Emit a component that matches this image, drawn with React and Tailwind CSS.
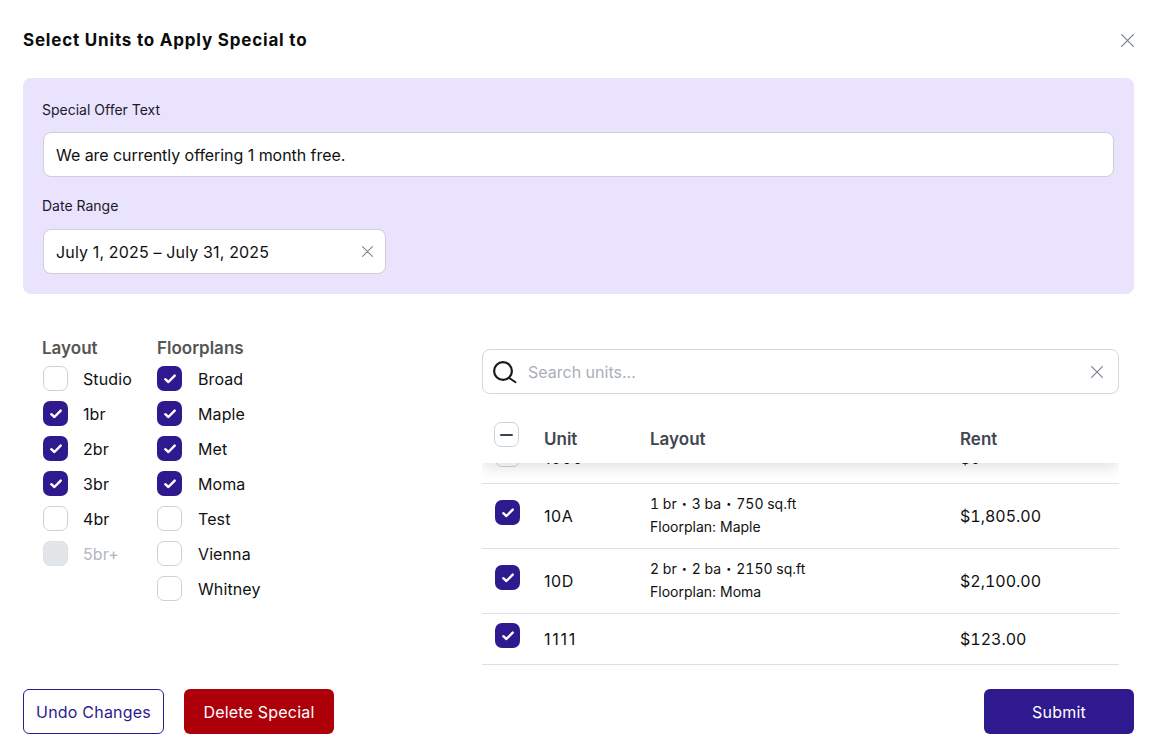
import React from "react";

const font = { fontFamily: "Inter, 'Liberation Sans', sans-serif" };

function Check() {
  return (
    <svg width="12" height="10" viewBox="0 0 12 10" fill="none">
      <path d="M1.3 5.2 L4.4 8 L10.7 1.6" stroke="white" strokeWidth="2.4" strokeLinecap="round" strokeLinejoin="round" />
    </svg>
  );
}

function Box({ state = "off" }) {
  if (state === "on")
    return (
      <span className="flex h-[25px] w-[25px] shrink-0 items-center justify-center rounded-[7px] bg-[#2e1a8e]">
        <Check />
      </span>
    );
  if (state === "disabled")
    return <span className="block h-[25px] w-[25px] shrink-0 rounded-[7px] border border-[#dde1e5] bg-[#e3e6e9]" />;
  if (state === "mixed")
    return (
      <span className="flex h-[25px] w-[25px] shrink-0 items-center justify-center rounded-[7px] border border-[#ccd2da] bg-white">
        <span className="block h-[2px] w-[13px] rounded-full bg-[#374151]" />
      </span>
    );
  return <span className="block h-[25px] w-[25px] shrink-0 rounded-[7px] border border-[#ccd2da] bg-white" />;
}

function XIcon({ size = 13, color = "#7c858f" }) {
  return (
    <svg width={size} height={size} viewBox="0 0 12 12" fill="none" className="shrink-0">
      <path d="M0.6 0.6 L11.4 11.4 M11.4 0.6 L0.6 11.4" stroke={color} strokeWidth="1.2" strokeLinecap="round" />
    </svg>
  );
}

function Option({ label, state, gap, disabled }) {
  return (
    <div className="flex h-[35px] items-center">
      <Box state={state} />
      <span className={`text-base tracking-[0.1px] ${gap} ${disabled ? "text-[#b0b7bf]" : "text-[#111111]"}`}>{label}</span>
    </div>
  );
}

function Dot() {
  return <span className="mx-[5px] text-[9px] leading-none">•</span>;
}

function Row({ unit, unitClass, details, floorplan, rent, h, state = "on" }) {
  return (
    <div className={`flex ${h} items-center border-b border-[#dcdfe3] pl-[13px] text-base text-[#111111]`}>
      <div className="mb-[7px] w-[49px] shrink-0">
        <Box state={state} />
      </div>
      <div className={`w-[106px] shrink-0 ${unitClass}`}>{unit}</div>
      <div className="mb-[2px] w-[310px] shrink-0 text-sm leading-[23px]">
        {details && (
          <div className="flex items-center tabular-nums">
            <span>{details[0]}</span>
            <Dot />
            <span>{details[1]}</span>
            <Dot />
            <span>{details[2]}</span>
          </div>
        )}
        {floorplan && <div>Floorplan: {floorplan}</div>}
      </div>
      <div className="tabular-nums">{rent}</div>
    </div>
  );
}

export default function App() {
  const layouts = [["Studio", "off"], ["1br", "on"], ["2br", "on"], ["3br", "on"], ["4br", "off"], ["5br+", "disabled"]];
  const plans = [["Broad", "on"], ["Maple", "on"], ["Met", "on"], ["Moma", "on"], ["Test", "off"], ["Vienna", "off"], ["Whitney", "off"]];
  return (
    <div style={font} className="flex h-[756px] w-full flex-col overflow-hidden bg-white pl-[23px] pr-[22px] text-[#111111]">
      <div className="flex h-[78px] shrink-0 items-center justify-between pt-[3px]">
        <h1 className="text-[17px] font-bold tracking-[0.8px] text-[#0b0b0b]">Select Units to Apply Special to</h1>
        <button className="flex h-[13px] w-[13px] items-center justify-center">
          <XIcon size={13} />
        </button>
      </div>

      <section className="h-[216px] shrink-0 rounded-lg bg-[#e9e3fd] px-[20px] pt-[22px]">
        <div className="ml-[-1px] h-[20px] text-sm leading-[20px] text-[#1a1a2a]">Special Offer Text</div>
        <div className="mt-[12px] flex h-[45px] items-center rounded-lg border border-[#cfcfd6] bg-white px-[12px] text-base tracking-[-0.05px]">
          We are currently offering 1 month free.
        </div>
        <div className="ml-[-1px] mt-[19px] h-[20px] text-sm leading-[20px] text-[#1a1a2a]">Date Range</div>
        <div className="mt-[13px] flex h-[45px] w-[343px] items-center justify-between rounded-lg border border-[#cfcfd6] bg-white pl-[12px] pr-[12px] text-base tracking-[0.15px]">
          <span>July 1, 2025 – July 31, 2025</span>
          <XIcon size={11} />
        </div>
      </section>

      <div className="flex h-[395px] shrink-0">
        <div className="flex w-[459px] shrink-0 pl-[20px] pt-[44px]">
          <div className="w-[114px] shrink-0">
            <div className="mb-[3px] ml-[-1px] h-[20px] text-[17px] font-semibold leading-[20px] text-[#555555]">Layout</div>
            {layouts.map(([l, s]) => (
              <Option key={l} label={l} state={s} gap="ml-[15px]" disabled={s === "disabled"} />
            ))}
          </div>
          <div>
            <div className="mb-[3px] h-[20px] text-[17px] font-semibold leading-[20px] text-[#555555]">Floorplans</div>
            {plans.map(([l, s]) => (
              <Option key={l} label={l} state={s} gap="ml-[16px]" />
            ))}
          </div>
        </div>

        <div className="w-[637px] shrink-0 pt-[55px]">
          <div className="flex h-[45px] items-center rounded-lg border border-[#d4d6d9] bg-white pl-[10px] pr-[15px]">
            <svg width="24" height="26" viewBox="0 0 24 26" fill="none" className="shrink-0">
              <circle cx="10" cy="12" r="8.9" stroke="#1a1a1a" strokeWidth="2.2" />
              <path d="M17 19.5 L22.5 23.3" stroke="#1a1a1a" strokeWidth="2" strokeLinecap="round" />
            </svg>
            <span className="ml-[11px] flex-1 text-base text-[#a8afb8]">Search units...</span>
            <XIcon size={12} />
          </div>

          <div className="relative mt-[20px] h-[252px] overflow-hidden">
            <div className="relative z-10 flex h-[49px] items-center bg-white pl-[12px] pt-[2px] text-[17px] font-semibold text-[#3f4650] shadow-[0_4px_14px_rgba(0,0,0,0.12)]">
              <div className="mb-[10px] w-[50px] shrink-0">
                <Box state="mixed" />
              </div>
              <div className="w-[106px] shrink-0">Unit</div>
              <div className="w-[310px] shrink-0">Layout</div>
              <div>Rent</div>
            </div>
            <div className="mt-[-30px]">
              <Row unit="1000" unitClass="tracking-[0.6px]" rent="$0" h="h-[51px]" state="off" />
              <Row unit="10A" unitClass="tracking-[0.6px]" details={["1 br", "3 ba", "750 sq.ft"]} floorplan="Maple" rent="$1,805.00" h="h-[65px]" />
              <Row unit="10D" unitClass="tracking-[0.6px]" details={["2 br", "2 ba", "2150 sq.ft"]} floorplan="Moma" rent="$2,100.00" h="h-[65px]" />
              <Row unit="1111" unitClass="tracking-[1.75px]" rent="$123.00" h="h-[51px]" />
            </div>
          </div>
        </div>
      </div>

      <div className="flex h-[45px] shrink-0 items-center justify-between text-base tracking-[0.2px]">
        <div className="flex gap-[20px]">
          <button className="h-[45px] w-[141px] rounded-md border border-[#2e1a8e] bg-white text-[#2e1a8e]">Undo Changes</button>
          <button className="h-[45px] w-[150px] rounded-md bg-[#ae000a] text-white">Delete Special</button>
        </div>
        <button className="h-[45px] w-[150px] rounded-md bg-[#2e1a8e] text-white">Submit</button>
      </div>
    </div>
  );
}
